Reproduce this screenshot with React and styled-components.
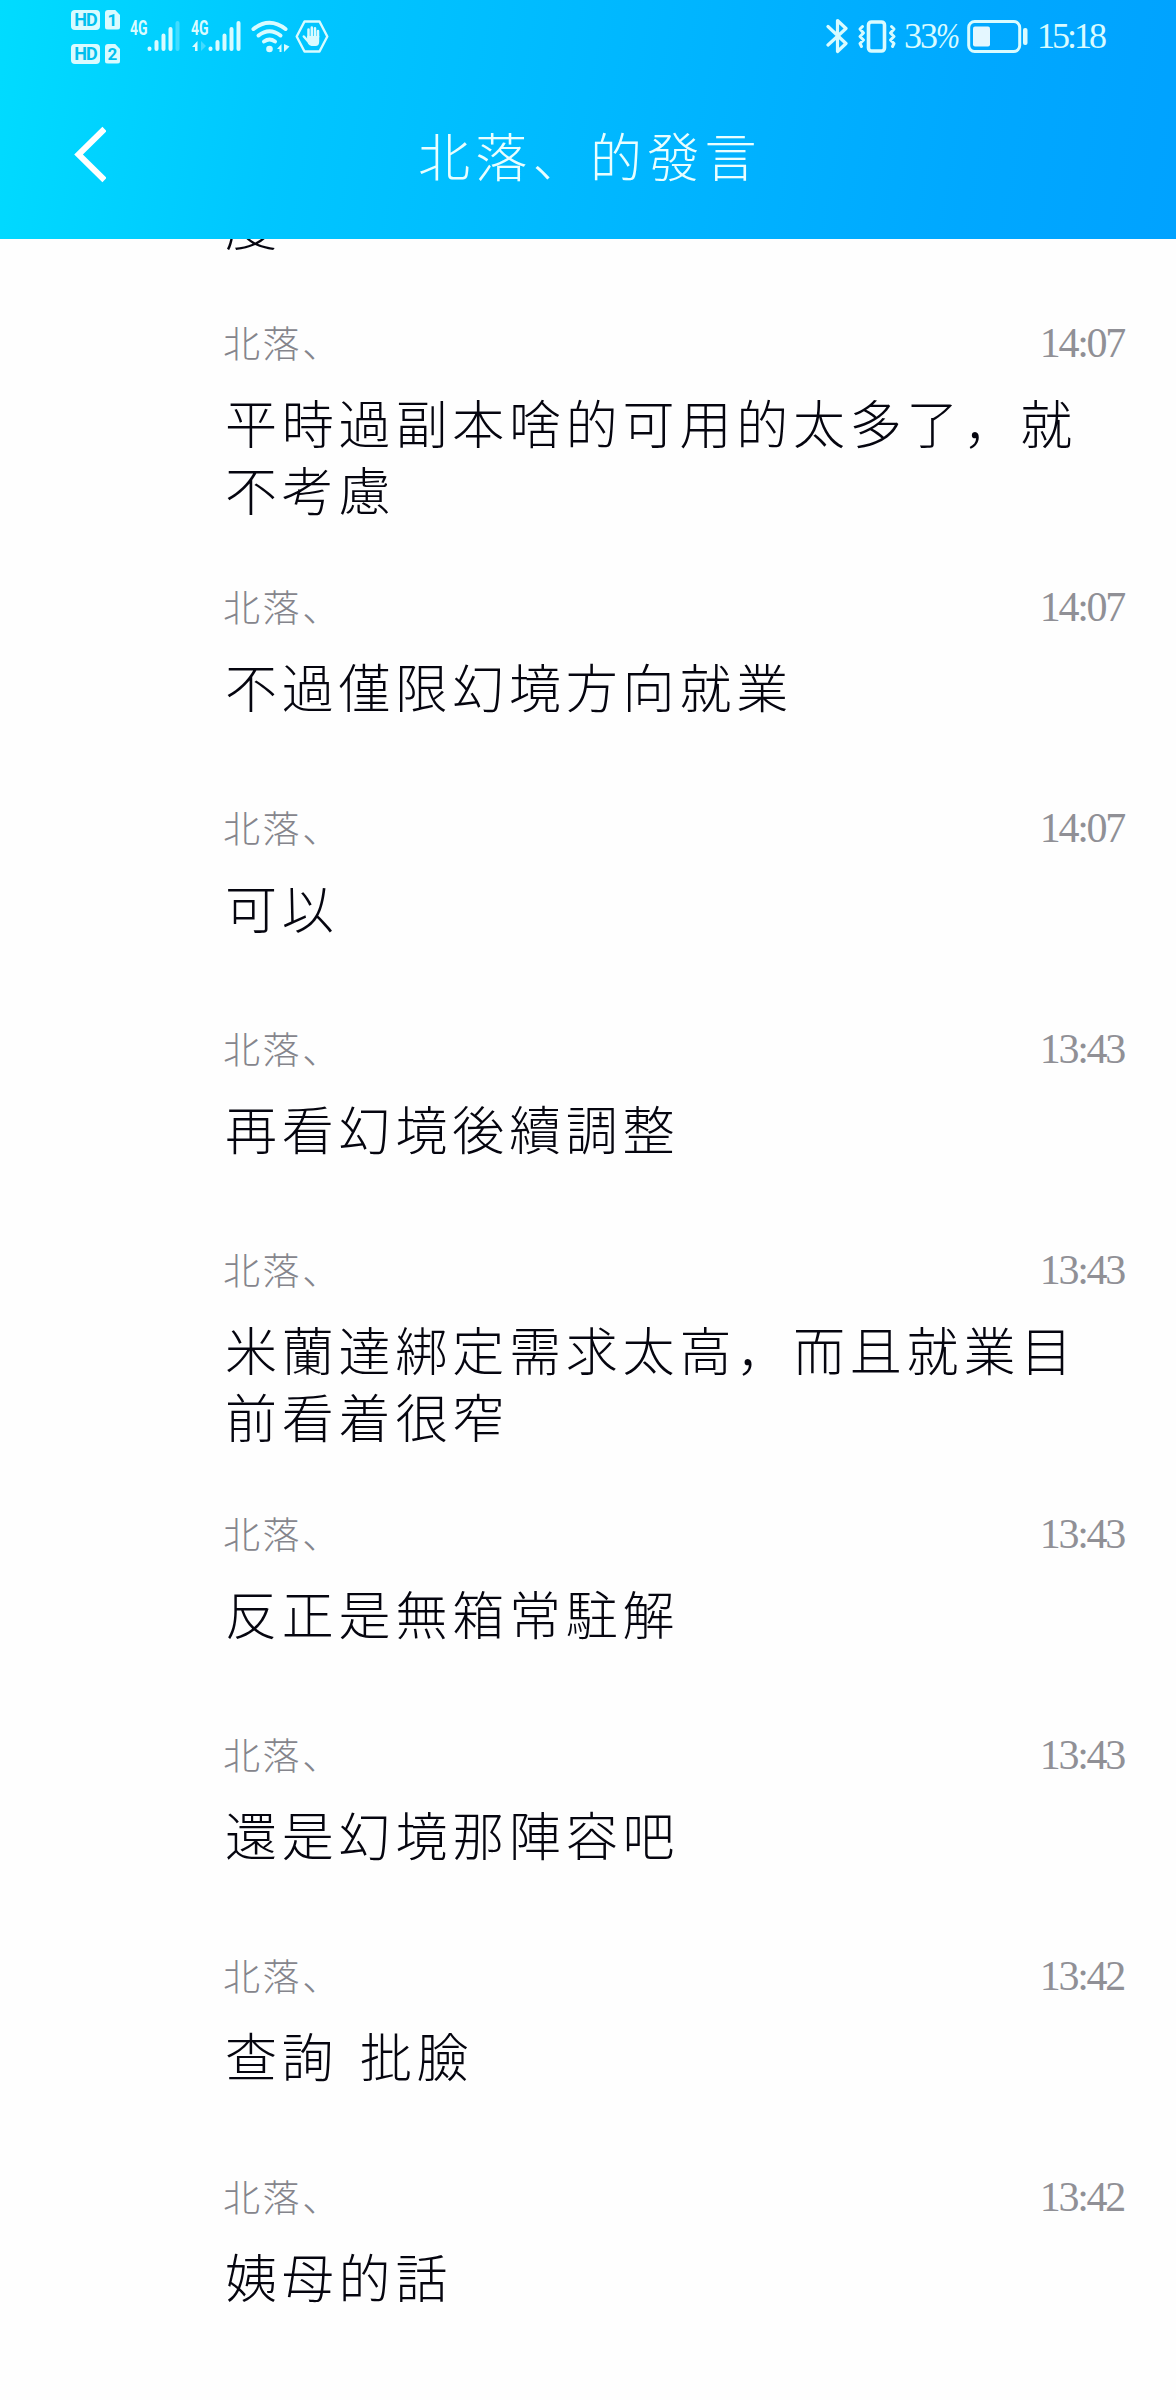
import React from 'react'
import styled, { createGlobalStyle } from 'styled-components'

const messages = [
  { time: '14:07', text: '平時過副本啥的可用的太多了，就不考慮' },
  { time: '14:07', text: '不過僅限幻境方向就業' },
  { time: '14:07', text: '可以' },
  { time: '13:43', text: '再看幻境後續調整' },
  { time: '13:43', text: '米蘭達綁定需求太高，而且就業目前看着很窄' },
  { time: '13:43', text: '反正是無箱常駐解' },
  { time: '13:43', text: '還是幻境那陣容吧' },
  { time: '13:42', text: '查詢 批臉' },
  { time: '13:42', text: '姨母的話' },
]

function SimLabel({ slot }) {
  return (
    <Sim>
      <HdBadge>HD</HdBadge>
      <SlotBadge>{slot}</SlotBadge>
    </Sim>
  )
}

function Signal({ data, weak }) {
  return (
    <SignalBox>
      <Network>4G</Network>
      <svg width="52" height="34" viewBox="0 0 52 34" fill="none">
        {data && <path d="M6.5 22v10H4v-4H1z" fill="#d9fbff" />}
        {data && <path d="M10 22v10l5-5z" fill="#d9fbff" opacity=".3" />}
        <g stroke="#d9fbff" strokeWidth="4" strokeLinecap="round">
          <path d="M19.5 29.500v.5M26.500 23v7M33.500 16.500v13.500M40.500 10v20" />
          <path d="M47.500 4v26" opacity={weak ? 0.3 : 1} />
        </g>
      </svg>
    </SignalBox>
  )
}

export default function App() {
  return (
    <>
      <GlobalStyle />
      <Screen>
        <Header>
          <StatusBar>
            <SimColumn>
              <SimLabel slot="1" />
              <SimLabel slot="2" />
            </SimColumn>
            <Signal weak />
            <Signal data />

            {/* Wifi */}
            <WifiIcon width="39" height="33" viewBox="0 0 39 33" fill="none">
              <g stroke="#d9fbff" strokeWidth="4" strokeLinecap="round">
                <path d="M2.500 9Q18.500 -3.500 34.500 9" />
                <path d="M7.500 15.500Q18.500 7 29.500 15.500" />
                <path d="M13 21.500Q18.500 17.500 24 21.500" />
              </g>
              <circle cx="18.500" cy="29" r="3.300" fill="#d9fbff" />
              <path d="M30.500 24v8h-2v-3H26zM33 24v8l5.500-5.500z" fill="#d9fbff" />
            </WifiIcon>

            {/* Hand in hexagon */}
            <HandIcon width="34" height="33" viewBox="0 0 34 33" fill="none">
              <path d="M9.500 1.500h15L32.300 16.500l-7.800 15h-15L1.700 16.500z" stroke="#d9fbff" strokeWidth="2.400" strokeLinejoin="round" />
              <g stroke="#d9fbff" strokeWidth="2.500" strokeLinecap="round">
                <path d="M13.500 17V9.500M16.800 16V7.500M20 16V8.200M23 17v-6M8.800 16.500l4 4.500" />
              </g>
              <path d="M12.200 16h12v5.500q0 4.500-3.700 4.500h-4q-4.300-1-4.500-6z" fill="#d9fbff" />
            </HandIcon>

            <Spacer />

            {/* Bluetooth */}
            <svg width="22" height="36" viewBox="0 0 22 36" fill="none" stroke="#d9fbff" strokeWidth="3.200" strokeLinecap="round" strokeLinejoin="round">
              <path d="M2 8.500l18 17-8.500 8V2.500L20 10.500 2 27" />
            </svg>

            {/* Vibrate */}
            <VibrateIcon width="40" height="34" viewBox="0 0 40 34" fill="none" stroke="#d9fbff" strokeLinecap="round" strokeLinejoin="round">
              <rect x="11.500" y="3" width="16" height="29" rx="3" strokeWidth="3.600" />
              <path d="M5.500 7.500L3 10l3.500 4L3 17.500l3.500 3.500L3 24.500l1.500 3M34.500 7.500L37 10l-3.500 4 3.500 3.500-3.500 3.500 3.500 3.500-1.500 3" strokeWidth="3" />
            </VibrateIcon>

            <Percent>
              33<i>%</i>
            </Percent>

            {/* Battery */}
            <BatteryIcon width="61" height="34" viewBox="0 0 61 34" fill="none">
              <rect x="1.700" y="2.500" width="51" height="30" rx="6" stroke="#d9fbff" strokeWidth="3" />
              <rect x="6" y="7.500" width="17" height="20" rx="2" fill="#e4f7ff" />
              <rect x="56" y="9" width="4.500" height="17" rx="2" fill="#d9fbff" />
            </BatteryIcon>
            <Clock>15:18</Clock>
          </StatusBar>

          <NavBar>
            <svg width="34" height="58" viewBox="0 0 34 58" fill="none">
              <path d="M32.500 3L6.500 28.500 32.500 54" stroke="#fff" strokeWidth="6" />
            </svg>
            <Title>北落、的發言</Title>
          </NavBar>
        </Header>

        {/* Tail of the message scrolled under the header */}
        <ScrolledTail>
          <Text>度</Text>
        </ScrolledTail>

        {messages.map((m, i) => (
          <Message key={i}>
            <Meta>
              <Name>北落、</Name>
              <Time>{m.time}</Time>
            </Meta>
            <Text>{m.text}</Text>
          </Message>
        ))}
      </Screen>
    </>
  )
}

const GlobalStyle = createGlobalStyle`
  * {
    box-sizing: border-box;
  }

  body {
    margin: 0;
    background: #fefefe;
  }
`;

const Screen = styled.div`
    width: 1176px;
    height: 2400px;
    overflow: hidden;
    background: #fefefe;
    font-family: "Noto Sans CJK JP", "Noto Sans CJK TC", sans-serif;
    font-weight: 300;
`;

const Header = styled.header`
    height: 239px;
    background: linear-gradient(100deg, #00dcff 0%, #00c6ff 25%, #00b6ff 55%, #00a8ff 82%, #00a2ff 100%);
`;

const StatusBar = styled.div`
    height: 72px;
    display: flex;
    align-items: center;
    padding-left: 71px;
    padding-right: 70px;
    color: #d9fbff;
`;

const SimColumn = styled.div`
    display: flex;
    flex-direction: column;
    gap: 14px;
    padding-top: 1px;
    margin-right: 10px;
`;

const Sim = styled.div`
    display: flex;
    gap: 5px;
    font-family: Roboto, sans-serif;
    font-weight: 700;
    line-height: 20px;
    color: #00bfee;
    text-align: center;
`;

const HdBadge = styled.span`
    width: 29px;
    height: 20px;
    border-radius: 4px;
    background: #d9fbff;
    font-size: 18px;
    letter-spacing: -1px;
`;

const SlotBadge = styled.span`
    width: 15px;
    height: 20px;
    border-radius: 3px;
    clip-path: polygon(0 0, 65% 0, 100% 28%, 100% 100%, 0 100%);
    background: #d9fbff;
    font-size: 17px;
`;

const SignalBox = styled.div`
    width: 61px;
    height: 34px;
    display: grid;
    justify-items: start;

    > * {
      grid-area: 1 / 1;
    }
`;

const Network = styled.span`
    font: 700 20px/18px Roboto, sans-serif;
    transform: scaleX(.7);
    transform-origin: left;
`;

const WifiIcon = styled.svg`
    margin-left: -1px;
`;

const HandIcon = styled.svg`
    margin-left: 5px;
`;

const Spacer = styled.div`
    flex: 1;
`;

const VibrateIcon = styled.svg`
    margin-left: 9px;
`;

const Percent = styled.span`
    width: 58px;
    margin-left: 7px;
    font: 400 36px/40px "Liberation Serif", serif;
    letter-spacing: -2px;
    white-space: nowrap;

    i {
      display: inline-block;
      transform: scaleX(.8);
      transform-origin: left;
    }
`;

const BatteryIcon = styled.svg`
    margin-left: 5px;
`;

const Clock = styled.span`
    width: 69px;
    margin-left: 9px;
    font: 400 36px/40px "Liberation Serif", serif;
    letter-spacing: -3px;
    white-space: nowrap;
`;

const NavBar = styled.div`
    height: 167px;
    padding-left: 72px;
    display: flex;
    align-items: center;

    svg {
      margin-bottom: 1px;
    }
`;

const Title = styled.h1`
    margin: 0 0 2px 312px;
    font-size: 52px;
    font-weight: 300;
    line-height: 60px;
    letter-spacing: 5.3px;
    color: #e9feff;
`;

const ScrolledTail = styled.div`
    height: 66px;
    padding-left: 225px;
    overflow: hidden;

    p {
      margin-top: -49px;
    }
`;

const Message = styled.article`
    min-height: 221px;
    padding: 0 49px 47px 225px;
`;

const Meta = styled.div`
    height: 83px;
    display: flex;
    align-items: center;
    justify-content: space-between;
    padding-bottom: 8px;
    color: #85858c;
`;

const Name = styled.span`
    margin-left: -2px;
    margin-bottom: 2px;
    font-size: 37px;
    line-height: 48px;
    letter-spacing: 2.6px;
`;

const Time = styled.span`
    font: 400 42px/48px "Liberation Serif", serif;
    letter-spacing: -2.3px;
    margin-right: 3px;
    color: #909096;
`;

const Text = styled.p`
    width: 860px;
    margin: 0;
    font-size: 52px;
    line-height: 67px;
    letter-spacing: 4.8px;
    word-spacing: 5px;
    color: #05050f;
`;
